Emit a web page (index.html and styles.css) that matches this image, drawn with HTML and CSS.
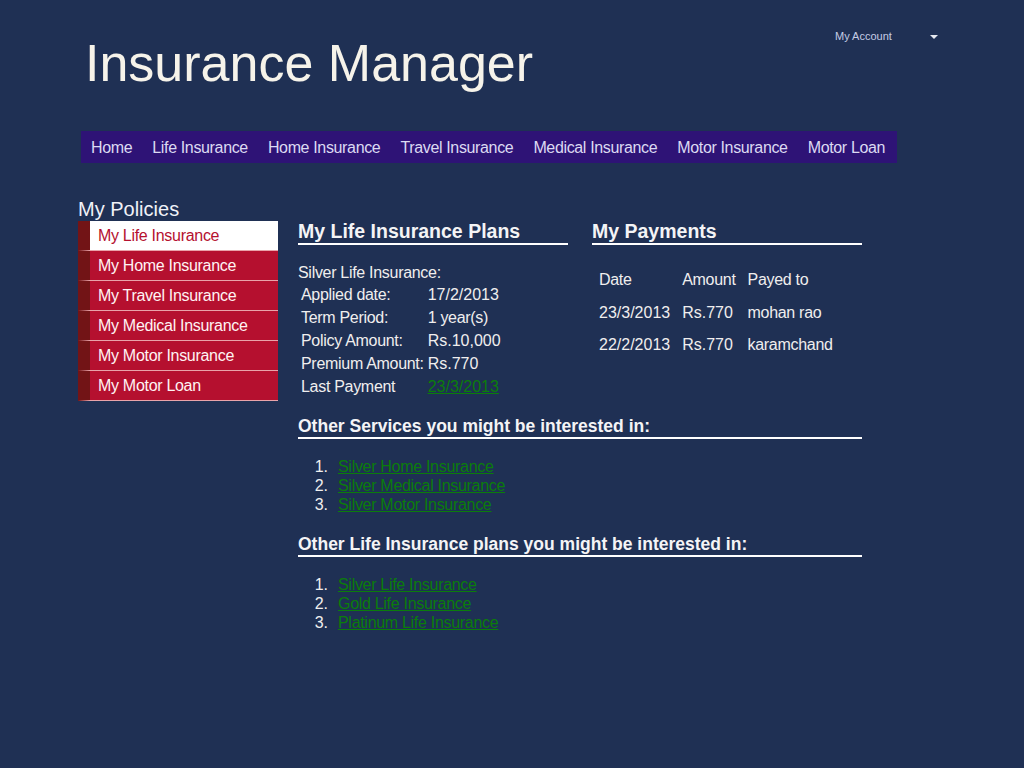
FILE: index.html
```html
<!DOCTYPE html>
<html>
<head>
<meta charset="utf-8">
<title>Insurance Manager</title>
<link rel="stylesheet" href="styles.css">
</head>
<body>
<div class="page">
  <header class="header">
    <h1 class="title">Insurance Manager</h1>
    <div class="account"><span>My Account</span><span class="caret"></span></div>
  </header>
  <nav class="nav">
    <a href="#">Home</a>
    <a href="#">Life Insurance</a>
    <a href="#">Home Insurance</a>
    <a href="#">Travel Insurance</a>
    <a href="#">Medical Insurance</a>
    <a href="#">Motor Insurance</a>
    <a href="#">Motor Loan</a>
  </nav>
  <div class="layout">
    <aside class="sidebar">
      <h2 class="side-title">My Policies</h2>
      <ul class="side-list">
        <li class="active"><a href="#">My Life Insurance</a></li>
        <li><a href="#">My Home Insurance</a></li>
        <li><a href="#">My Travel Insurance</a></li>
        <li><a href="#">My Medical Insurance</a></li>
        <li><a href="#">My Motor Insurance</a></li>
        <li><a href="#">My Motor Loan</a></li>
      </ul>
    </aside>
    <main class="main">
      <div class="top-row">
        <section class="col">
          <h3 class="heading">My Life Insurance Plans</h3>
          <div class="plan-name">Silver Life Insurance:</div>
          <table class="plan">
            <tr><td>Applied date:</td><td class="num">17/2/2013</td></tr>
            <tr><td>Term Period:</td><td>1 year(s)</td></tr>
            <tr><td>Policy Amount:</td><td class="num">Rs.10,000</td></tr>
            <tr><td>Premium Amount:</td><td class="num">Rs.770</td></tr>
            <tr><td>Last Payment</td><td class="num"><a href="#" class="link">23/3/2013</a></td></tr>
          </table>
        </section>
        <section class="col">
          <h3 class="heading">My Payments</h3>
          <table class="payments">
            <tr class="head-row"><td>Date</td><td>Amount</td><td>Payed to</td></tr>
            <tr><td class="num">23/3/2013</td><td class="num">Rs.770</td><td>mohan rao</td></tr>
            <tr><td class="num">22/2/2013</td><td class="num">Rs.770</td><td>karamchand</td></tr>
          </table>
        </section>
      </div>
      <section class="wide">
        <h3 class="heading small">Other Services you might be interested in:</h3>
        <ol class="links">
          <li><a href="#" class="link">Silver Home Insurance</a></li>
          <li><a href="#" class="link">Silver Medical Insurance</a></li>
          <li><a href="#" class="link">Silver Motor Insurance</a></li>
        </ol>
      </section>
      <section class="wide">
        <h3 class="heading small">Other Life Insurance plans you might be interested in:</h3>
        <ol class="links">
          <li><a href="#" class="link">Silver Life Insurance</a></li>
          <li><a href="#" class="link">Gold Life Insurance</a></li>
          <li><a href="#" class="link">Platinum Life Insurance</a></li>
        </ol>
      </section>
    </main>
  </div>
</div>
</body>
</html>
```
FILE: styles.css
```css
html, body {
  margin: 0;
  padding: 0;
}
body {
  background: #1f3054;
  color: #f0eeee;
  font-family: "Liberation Sans", Arial, sans-serif;
  font-size: 16px;
  letter-spacing: -0.3px;
  height: 768px;
}
.page {
  padding-left: 78px;
}
.header {
  display: flex;
  align-items: flex-start;
}
.title {
  flex: 1;
  margin: 33px 0 0 7px;
  font-size: 52px;
  font-weight: normal;
  line-height: 60px;
  letter-spacing: 0;
  color: #f6f3ea;
}
.account {
  display: flex;
  justify-content: space-between;
  align-items: center;
  width: 105px;
  margin: 30px 84px 0 0;
  font-size: 11px;
  line-height: 13px;
  letter-spacing: 0;
  color: #c4cce4;
}
.caret {
  width: 0;
  height: 0;
  border-left: 4px solid transparent;
  border-right: 4px solid transparent;
  border-top: 4px solid #e6e8f0;
  margin-right: 2px;
}
.nav {
  display: flex;
  width: 816px;
  margin: 38px 0 0 3px;
  background: #2e1376;
  white-space: nowrap;
}
.nav a {
  display: block;
  flex-shrink: 0;
  padding: 8px 10px 6px;
  line-height: 18px;
  letter-spacing: -0.35px;
  color: #dcdaf2;
  text-decoration: none;
}
.layout {
  display: flex;
  gap: 20px;
  margin-top: 35px;
}
.sidebar {
  width: 200px;
  flex-shrink: 0;
}
.side-title {
  margin: 0;
  font-size: 20px;
  font-weight: normal;
  line-height: 23px;
  letter-spacing: 0;
  color: #f0f2f8;
}
.side-list {
  list-style: none;
  margin: 0;
  padding: 0;
}
.side-list li {
  border-left: 12px solid #721416;
  border-bottom: 1px solid #e9a3aa;
  background: #b5102f;
}
.side-list li a {
  display: block;
  height: 29px;
  line-height: 29px;
  padding-left: 8px;
  color: #fff3f3;
  text-decoration: none;
}
.side-list li.active {
  background: #ffffff;
}
.side-list li.active a {
  color: #b5102f;
}
.main {
  width: 564px;
  padding-top: 22px;
}
.top-row {
  display: flex;
  gap: 24px;
}
.col {
  width: 270px;
}
.heading {
  margin: 0;
  padding-bottom: 1px;
  border-bottom: 2px solid #ffffff;
  font-size: 19.5px;
  line-height: 22px;
  font-weight: bold;
  letter-spacing: 0;
  color: #f4f4f6;
}
.heading.small {
  font-size: 17.5px;
  line-height: 20px;
}
.plan-name {
  margin-top: 18px;
  line-height: 19px;
}
.plan {
  border-spacing: 2px;
}
.plan td {
  padding: 1px;
  line-height: 19px;
}
.num {
  letter-spacing: 0;
}
.link {
  color: #0b7d0b;
  text-decoration: underline;
}
.payments {
  border-spacing: 2px;
  margin-top: 18px;
}
.payments td {
  padding: 5px;
  line-height: 20px;
}
.payments .head-row td {
  padding-bottom: 6px;
}
.wide {
  margin-top: 17px;
}
.wide + .wide {
  margin-top: 20px;
}
.links {
  margin: 18px 0 0;
  padding-left: 40px;
  list-style: none;
  counter-reset: item;
}
.links li {
  line-height: 19px;
  counter-increment: item;
}
.links li::before {
  content: counter(item) ".";
  display: inline-block;
  width: 30px;
  margin-left: -40px;
  padding-right: 10px;
  text-align: right;
  letter-spacing: 0;
}
```
